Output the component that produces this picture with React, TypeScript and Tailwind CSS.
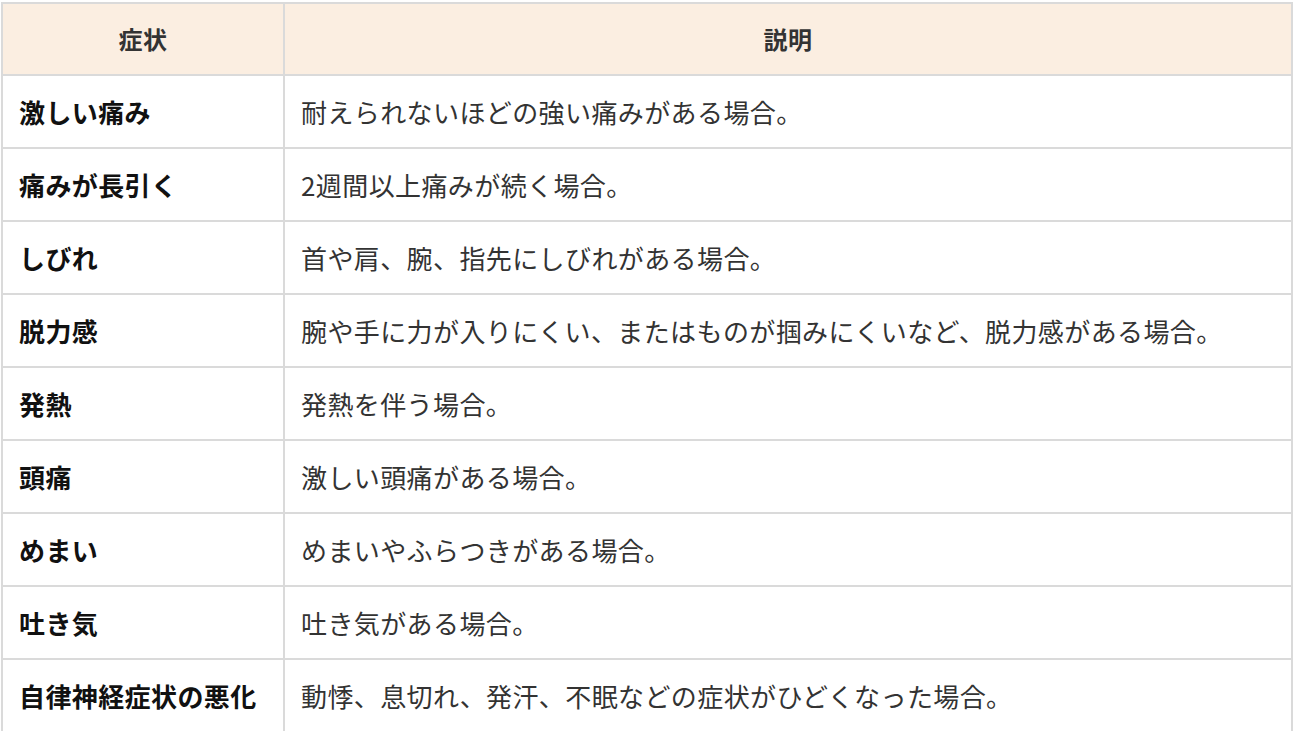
import React from 'react';

const rows: [string, string][] = [
  ['激しい痛み', '耐えられないほどの強い痛みがある場合。'],
  ['痛みが長引く', '2週間以上痛みが続く場合。'],
  ['しびれ', '首や肩、腕、指先にしびれがある場合。'],
  ['脱力感', '腕や手に力が入りにくい、またはものが掴みにくいなど、脱力感がある場合。'],
  ['発熱', '発熱を伴う場合。'],
  ['頭痛', '激しい頭痛がある場合。'],
  ['めまい', 'めまいやふらつきがある場合。'],
  ['吐き気', '吐き気がある場合。'],
  ['自律神経症状の悪化', '動悸、息切れ、発汗、不眠などの症状がひどくなった場合。'],
];

export default function App() {
  return (
    <div
      className="bg-white pt-[2px] pl-[1px] w-[1300px] h-[731px] overflow-hidden"
      style={{ fontFamily: '"Noto Sans CJK JP", "Noto Sans", sans-serif' }}
    >
      <table className="w-[1292px] border-collapse border-2 border-[#dadada] text-[26px] tracking-[0.4px] leading-none">
        <thead>
          <tr className="h-[72px] bg-[#fbeee1]">
            <th className="w-[282px] border-2 border-[#dadada] text-[24px] font-bold text-[#333] text-center">症状</th>
            <th className="border-2 border-[#dadada] text-[24px] font-bold text-[#333] text-center">説明</th>
          </tr>
        </thead>
        <tbody>
          {rows.map(([name, desc]) => (
            <tr key={name} className="h-[73px]">
              <td className="border-2 border-[#dadada] pl-[16px] font-bold text-[#111]">{name}</td>
              <td className="border-2 border-[#dadada] pl-[16px] text-[#333]">{desc}</td>
            </tr>
          ))}
        </tbody>
      </table>
    </div>
  );
}
